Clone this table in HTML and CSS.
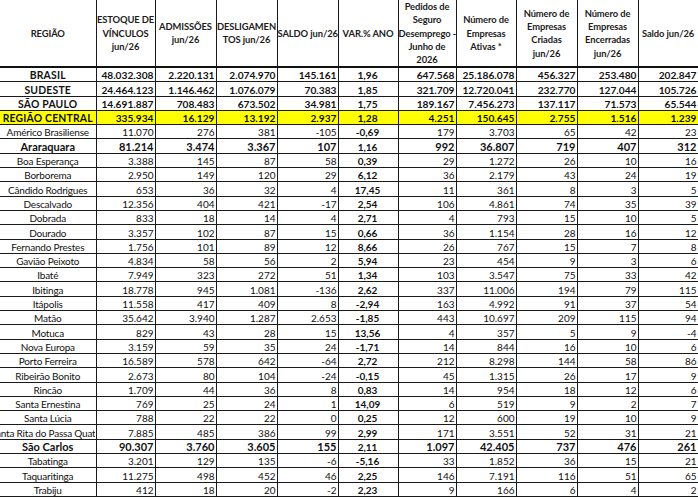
FILE: index.html
```html
<!DOCTYPE html>
<html lang="pt-BR">
<head>
<meta charset="utf-8">
<title>Região Central - Emprego jun/26</title>
<link rel="stylesheet" href="styles.css">
</head>
<body>
<table class="sheet">
<colgroup>
<col class="c-reg"><col class="c59"><col class="c61"><col class="c61"><col class="c61"><col class="c60"><col class="c58"><col class="c60"><col class="c61"><col class="c61"><col class="c60">
</colgroup>
<thead>
<tr class="head">
<th>REGIÃO</th>
<th>ESTOQUE DE<br>VÍNCULOS<br>jun/26</th>
<th>ADMISSÕES<br>jun/26</th>
<th>DESLIGAMEN<br>TOS jun/26</th>
<th>SALDO jun/26</th>
<th>VAR.% ANO</th>
<th>Pedidos de<br>Seguro<br>Desemprego -<br>Junho de<br>2026</th>
<th>Número de<br>Empresas<br>Ativas *</th>
<th>Número de<br>Empresas<br>Criadas<br>jun/26</th>
<th>Número de<br>Empresas<br>Encerradas<br>jun/26</th>
<th>Saldo jun/26</th>
</tr>
</thead>
<tbody>
<tr class="tot"><td class="nm">BRASIL</td><td>48.032.308</td><td>2.220.131</td><td>2.074.970</td><td>145.161</td><td class="v">1,96</td><td>647.568</td><td>25.186.078</td><td>456.327</td><td>253.480</td><td>202.847</td></tr>
<tr class="tot"><td class="nm">SUDESTE</td><td>24.464.123</td><td>1.146.462</td><td>1.076.079</td><td>70.383</td><td class="v">1,85</td><td>321.709</td><td>12.720.041</td><td>232.770</td><td>127.044</td><td>105.726</td></tr>
<tr class="tot"><td class="nm">SÃO PAULO</td><td>14.691.887</td><td>708.483</td><td>673.502</td><td>34.981</td><td class="v">1,75</td><td>189.167</td><td>7.456.273</td><td>137.117</td><td>71.573</td><td>65.544</td></tr>
<tr class="tot hl"><td class="nm">REGIÃO CENTRAL</td><td>335.934</td><td>16.129</td><td>13.192</td><td>2.937</td><td class="v">1,28</td><td>4.251</td><td>150.645</td><td>2.755</td><td>1.516</td><td>1.239</td></tr>
<tr><td class="nm">Américo Brasiliense</td><td>11.070</td><td>276</td><td>381</td><td>-105</td><td class="v">-0,69</td><td>179</td><td>3.703</td><td>65</td><td>42</td><td>23</td></tr>
<tr class="city"><td class="nm">Araraquara</td><td>81.214</td><td>3.474</td><td>3.367</td><td>107</td><td class="v">1,16</td><td>992</td><td>36.807</td><td>719</td><td>407</td><td>312</td></tr>
<tr><td class="nm">Boa Esperança</td><td>3.388</td><td>145</td><td>87</td><td>58</td><td class="v">0,39</td><td>29</td><td>1.272</td><td>26</td><td>10</td><td>16</td></tr>
<tr><td class="nm">Borborema</td><td>2.950</td><td>149</td><td>120</td><td>29</td><td class="v">6,12</td><td>36</td><td>2.179</td><td>43</td><td>24</td><td>19</td></tr>
<tr><td class="nm">Cândido Rodrigues</td><td>653</td><td>36</td><td>32</td><td>4</td><td class="v">17,45</td><td>11</td><td>361</td><td>8</td><td>3</td><td>5</td></tr>
<tr><td class="nm">Descalvado</td><td>12.356</td><td>404</td><td>421</td><td>-17</td><td class="v">2,54</td><td>106</td><td>4.861</td><td>74</td><td>35</td><td>39</td></tr>
<tr><td class="nm">Dobrada</td><td>833</td><td>18</td><td>14</td><td>4</td><td class="v">2,71</td><td>4</td><td>793</td><td>15</td><td>10</td><td>5</td></tr>
<tr><td class="nm">Dourado</td><td>3.357</td><td>102</td><td>87</td><td>15</td><td class="v">0,66</td><td>36</td><td>1.154</td><td>28</td><td>16</td><td>12</td></tr>
<tr><td class="nm">Fernando Prestes</td><td>1.756</td><td>101</td><td>89</td><td>12</td><td class="v">8,66</td><td>26</td><td>767</td><td>15</td><td>7</td><td>8</td></tr>
<tr><td class="nm">Gavião Peixoto</td><td>4.834</td><td>58</td><td>56</td><td>2</td><td class="v">5,94</td><td>23</td><td>454</td><td>9</td><td>3</td><td>6</td></tr>
<tr><td class="nm">Ibaté</td><td>7.949</td><td>323</td><td>272</td><td>51</td><td class="v">1,34</td><td>103</td><td>3.547</td><td>75</td><td>33</td><td>42</td></tr>
<tr><td class="nm">Ibitinga</td><td>18.778</td><td>945</td><td>1.081</td><td>-136</td><td class="v">2,62</td><td>337</td><td>11.006</td><td>194</td><td>79</td><td>115</td></tr>
<tr><td class="nm">Itápolis</td><td>11.558</td><td>417</td><td>409</td><td>8</td><td class="v">-2,94</td><td>163</td><td>4.992</td><td>91</td><td>37</td><td>54</td></tr>
<tr><td class="nm">Matão</td><td>35.642</td><td>3.940</td><td>1.287</td><td>2.653</td><td class="v">-1,85</td><td>443</td><td>10.697</td><td>209</td><td>115</td><td>94</td></tr>
<tr><td class="nm">Motuca</td><td>829</td><td>43</td><td>28</td><td>15</td><td class="v">13,56</td><td>4</td><td>357</td><td>5</td><td>9</td><td>-4</td></tr>
<tr><td class="nm">Nova Europa</td><td>3.159</td><td>59</td><td>35</td><td>24</td><td class="v">-1,71</td><td>14</td><td>844</td><td>16</td><td>10</td><td>6</td></tr>
<tr><td class="nm">Porto Ferreira</td><td>16.589</td><td>578</td><td>642</td><td>-64</td><td class="v">2,72</td><td>212</td><td>8.298</td><td>144</td><td>58</td><td>86</td></tr>
<tr><td class="nm">Ribeirão Bonito</td><td>2.673</td><td>80</td><td>104</td><td>-24</td><td class="v">-0,15</td><td>45</td><td>1.315</td><td>26</td><td>17</td><td>9</td></tr>
<tr><td class="nm">Rincão</td><td>1.709</td><td>44</td><td>36</td><td>8</td><td class="v">0,83</td><td>14</td><td>954</td><td>18</td><td>12</td><td>6</td></tr>
<tr><td class="nm">Santa Ernestina</td><td>769</td><td>25</td><td>24</td><td>1</td><td class="v">14,09</td><td>6</td><td>519</td><td>9</td><td>2</td><td>7</td></tr>
<tr><td class="nm">Santa Lúcia</td><td>788</td><td>22</td><td>22</td><td>0</td><td class="v">0,25</td><td>12</td><td>600</td><td>19</td><td>10</td><td>9</td></tr>
<tr><td class="nm"><div class="ov"><span>Santa Rita do Passa Quatro</span></div></td><td>7.885</td><td>485</td><td>386</td><td>99</td><td class="v">2,99</td><td>171</td><td>3.551</td><td>52</td><td>31</td><td>21</td></tr>
<tr class="city"><td class="nm">São Carlos</td><td>90.307</td><td>3.760</td><td>3.605</td><td>155</td><td class="v">2,11</td><td>1.097</td><td>42.405</td><td>737</td><td>476</td><td>261</td></tr>
<tr><td class="nm">Tabatinga</td><td>3.201</td><td>129</td><td>135</td><td>-6</td><td class="v">-5,16</td><td>33</td><td>1.852</td><td>36</td><td>15</td><td>21</td></tr>
<tr><td class="nm">Taquaritinga</td><td>11.275</td><td>498</td><td>452</td><td>46</td><td class="v">2,25</td><td>146</td><td>7.191</td><td>116</td><td>51</td><td>65</td></tr>
<tr><td class="nm">Trabiju</td><td>412</td><td>18</td><td>20</td><td>-2</td><td class="v">2,23</td><td>9</td><td>166</td><td>6</td><td>4</td><td>2</td></tr>
</tbody>
</table>
</body>
</html>
```
FILE: styles.css
```css
html, body {
  margin: 0;
  padding: 0;
  background: #ffffff;
}
body {
  font-family: Lato, "Open Sans", "Liberation Sans", sans-serif;
  color: #111111;
  overflow: hidden;
}
.sheet {
  width: 698px;
  table-layout: fixed;
  border-collapse: collapse;
}
.c-reg { width: 96px; }
.c58 { width: 58px; }
.c59 { width: 59px; }
.c60 { width: 60px; }
.c61 { width: 61px; }

.sheet th,
.sheet td {
  border: 1px solid #1a1a1a;
  padding: 0 1px 0 0;
  overflow: hidden;
  white-space: nowrap;
}
.sheet th:first-child,
.sheet td:first-child {
  border-left: none;
  padding: 0;
}
.sheet thead th {
  border-top: none;
  border-bottom: 2px solid #111111;
}

.head {
  height: 67px;
}
.head th {
  font-size: 9.4px;
  font-weight: 700;
  line-height: 13.3px;
  text-align: center;
  vertical-align: middle;
  color: #1c1c1c;
  padding: 0;
  letter-spacing: -0.1px;
}

tbody tr {
  height: 14.3px;
}
tbody td {
  font-size: 10px;
  line-height: 12px;
  text-align: right;
  vertical-align: bottom;
  font-weight: 400;
}
tbody td.nm {
  text-align: center;
  font-size: 10px;
  letter-spacing: -0.2px;
}
.ov {
  display: flex;
  justify-content: center;
  width: 95px;
  overflow: hidden;
}
.ov span {
  flex: none;
}
tbody td.v {
  text-align: center;
  font-weight: 700;
}

.tot td {
  font-weight: 700;
  font-size: 10.2px;
}
.tot td.nm {
  font-size: 10.4px;
  letter-spacing: 0.2px;
}
.hl td {
  background: #ffff00;
}
.city td {
  font-weight: 700;
  font-size: 11px;
}
.city td.nm {
  font-size: 11px;
  letter-spacing: 0;
}
.city td.v {
  font-size: 10px;
}
```
